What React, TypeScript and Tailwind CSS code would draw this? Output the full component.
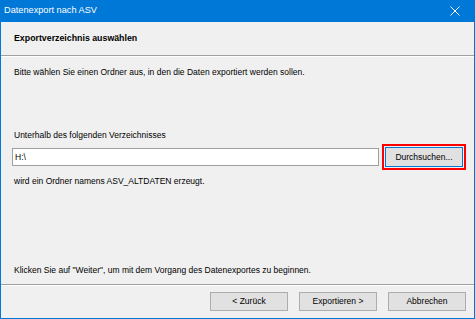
import React from "react";

/**
 * Datenexport nach ASV — wizard page for picking the export directory.
 * Win10-style dialog: blue title bar, header strip, body, footer buttons.
 */

const font = { fontFamily: '"Liberation Sans", Arial, sans-serif' };

function WinButton({ children }: { children: React.ReactNode }) {
  return (
    <button className="w-[78px] h-[19px] bg-[#e1e1e1] border border-[#adadad] text-[8.5px] leading-none text-black flex items-center justify-center">
      {children}
    </button>
  );
}

function Separator() {
  return (
    <div>
      <div className="h-px bg-[#a0a0a0]" />
      <div className="h-px bg-white" />
    </div>
  );
}

export default function App() {
  return (
    <div
      className="w-[475px] h-[319px] bg-[#0078d7] px-px pb-px flex flex-col"
      style={font}
    >
      {/* Title bar */}
      <div className="h-[22px] flex items-center justify-between pl-[3px] pr-[14px] text-white text-[9.2px]">
        <span>Datenexport nach ASV</span>
        <svg width="10" height="10" viewBox="0 0 10 10">
          <path d="M0.5 0.5 L9.5 9.5 M9.5 0.5 L0.5 9.5" stroke="white" strokeWidth="1" />
        </svg>
      </div>

      <div className="flex-1 bg-[#f0f0f0] flex flex-col text-black">
        {/* Header */}
        <div className="h-[33px] flex items-center pl-[13px] font-bold text-[8.8px]">
          Exportverzeichnis auswählen
        </div>
        <Separator />

        {/* Body */}
        <div className="flex-1 flex flex-col pl-[13px] text-[8.5px] leading-[12px]">
          <p className="mt-[9px]">
            Bitte wählen Sie einen Ordner aus, in den die Daten exportiert werden sollen.
          </p>
          <p className="mt-[51px]">Unterhalb des folgenden Verzeichnisses</p>
          <div className="mt-[6px] -ml-[2px] h-[20px] flex items-center">
            <div className="w-[367px] h-[18px] bg-white border border-[#a0a0a0] flex items-center pl-[2px]">
              H:\
            </div>
            <button className="ml-[6px] w-[78px] h-[20px] bg-[#e1e1e1] border border-[#0078d7] outline-2 outline-offset-1 outline-[#ff0000] flex items-center justify-center leading-none">
              Durchsuchen...
            </button>
          </div>
          <p className="mt-[8px]">wird ein Ordner namens ASV_ALTDATEN erzeugt.</p>
          <div className="flex-1" />
          <p className="mb-[8px]">
            Klicken Sie auf "Weiter", um mit dem Vorgang des Datenexportes zu beginnen.
          </p>
        </div>
        <Separator />

        {/* Footer */}
        <div className="mt-[6px] mb-[7px] flex justify-end gap-[11px] pr-[8px]">
          <WinButton>&lt; Zurück</WinButton>
          <WinButton>Exportieren &gt;</WinButton>
          <WinButton>Abbrechen</WinButton>
        </div>
      </div>
    </div>
  );
}
